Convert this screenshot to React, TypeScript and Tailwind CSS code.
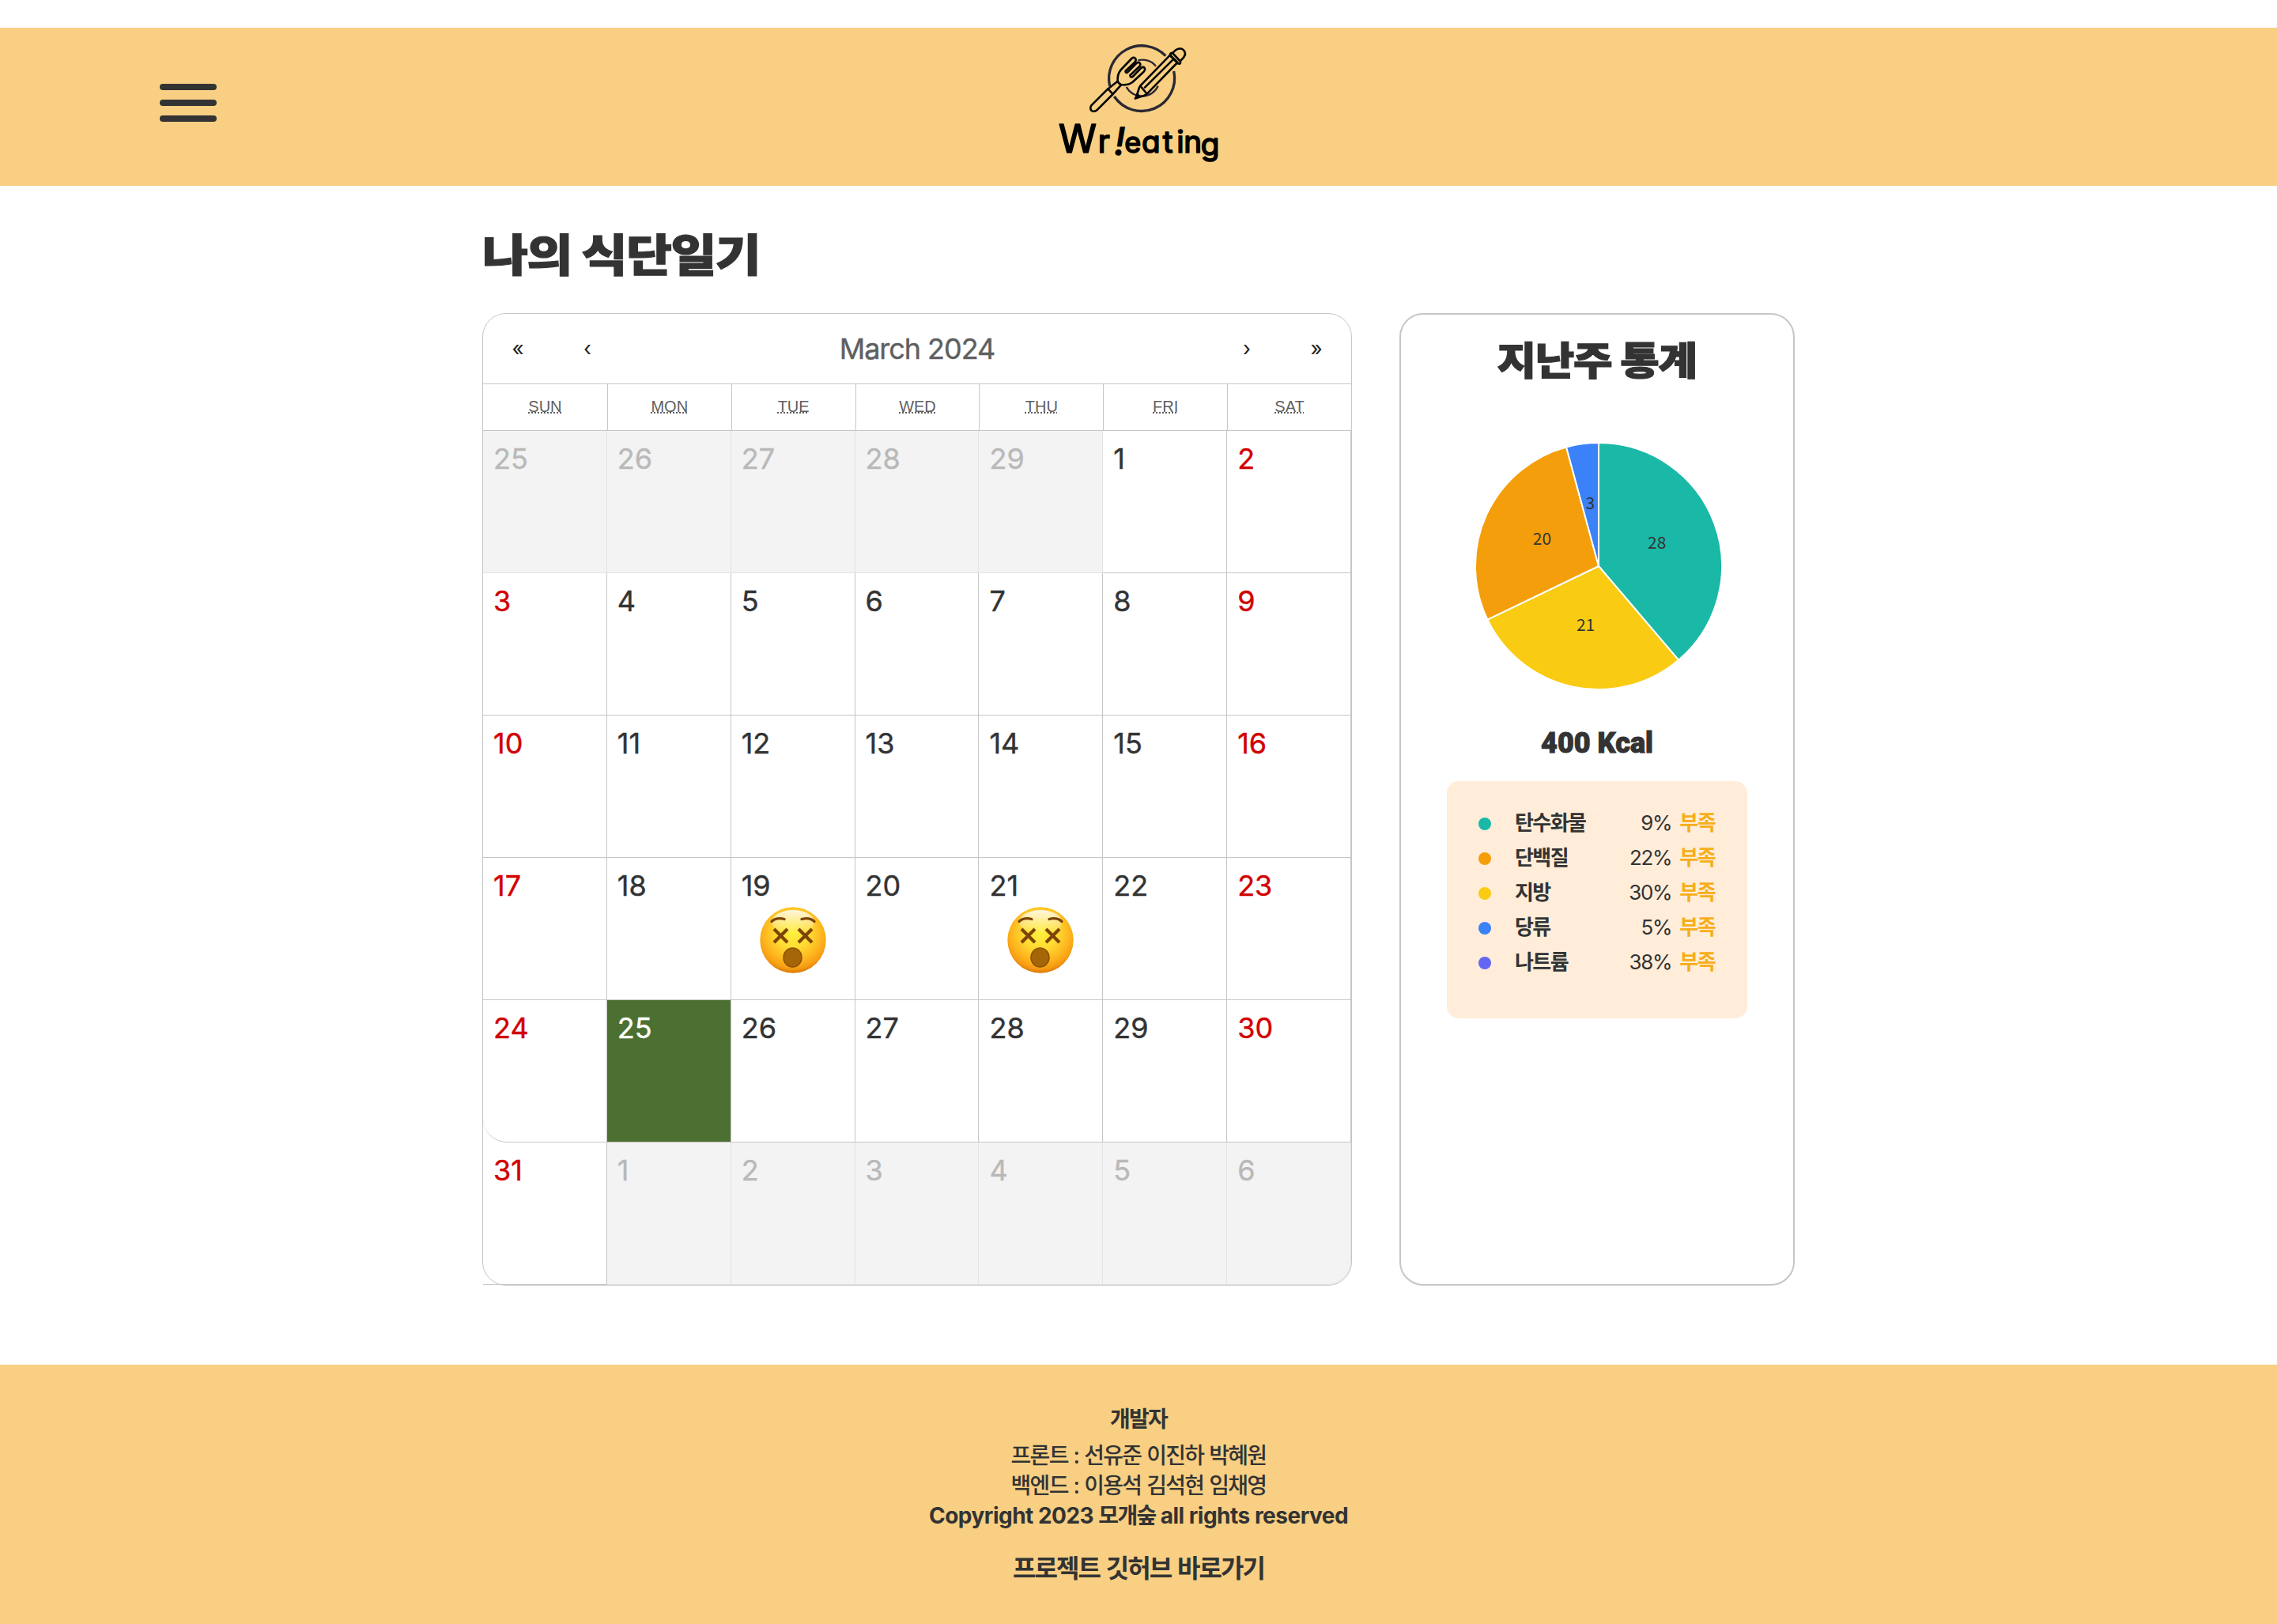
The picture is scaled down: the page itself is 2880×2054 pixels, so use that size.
const SANS = "font-['Inter','Noto_Sans_CJK_KR',sans-serif]";

const WEEKDAYS = ['SUN', 'MON', 'TUE', 'WED', 'THU', 'FRI', 'SAT'];

type Day = { label: number; outside: boolean; index: number };

const DAYS: Day[] = Array.from({ length: 42 }, (_, index) => {
  if (index < 5) return { label: 25 + index, outside: true, index };
  if (index < 36) return { label: index - 4, outside: false, index };
  return { label: index - 35, outside: true, index };
});

const NUTRIENTS = [
  { name: '탄수화물', percent: 9, dot: 'bg-[#1ab8a7]' },
  { name: '단백질', percent: 22, dot: 'bg-[#f59e0b]' },
  { name: '지방', percent: 30, dot: 'bg-[#f9cb13]' },
  { name: '당류', percent: 5, dot: 'bg-[#3b82f8]' },
  { name: '나트륨', percent: 38, dot: 'bg-[#6366f1]' },
];

function Logo() {
  return (
    <svg viewBox="0 15 720 600" className="h-[200px] w-[240px]" fill="none" strokeLinecap="round" strokeLinejoin="round">
      <g stroke="#2b2933" strokeWidth="10" strokeLinecap="butt">
        <path d="M463 122 A125 125 0 0 0 251 237" />
        <path d="M268 276 A125 125 0 0 0 494 180" />
        <path strokeWidth="7" d="M358 139 A67 67 0 0 1 426 161" />
        <path strokeWidth="7" d="M314 240 A67 67 0 0 0 434 236" />
      </g>
      <g stroke="#080808" strokeWidth="8">
        <path d="M244 247 L181 310 Q174 322 182 330 Q191 336 202 328 L263 267 Z" />
        <path d="M246 246 L281 218 M264 266 L294 232" />
        <path d="M281 218 Q279 190 294 174 L334 132 Q343 125 349 133 Q352 139 346 146 L311 179 Q309 187 318 185 L352 150 Q361 143 366 151 Q369 157 363 163 L328 196 Q329 205 338 201 L371 167 Q380 161 384 170 Q386 176 380 182 L337 222 Q320 235 294 231 Q284 228 281 218 Z" />
        <path d="M373 229 L480 119 L508 147 L399 259 Q392 268 382 272 L350 283 L363 242 Q366 234 373 229 Z" />
        <path d="M384 242 L491 136 M368 237 L390 264" />
        <path d="M480 119 L488 110 L517 141 Q522 148 516 152 Q510 153 506 147 L482 123 Q478 116 483 112 Q487 109 490 112" />
        <path d="M493 108 Q506 92 523 95 Q538 102 537 117 Q534 127 522 138" />
        <path fill="#080808" strokeWidth="4" d="M356 264 L345 285 L367 277 Z" />
      </g>
      <text
        x="57 206 268 307 372 452 505 532 596"
        y="489 489 497 489 489 489 489 489 497"
        fill="#000"
        stroke="#000"
        strokeWidth="5"
        className="font-['Inter',sans-serif] text-[116px] font-normal [font-feature-settings:'cv11']"
      >
        <tspan className="text-[146px]">W</tspan>
        <tspan className="text-[120px]">r</tspan>
        <tspan className="text-[144px] italic">!</tspan>
        <tspan className="text-[108px]">e</tspan>
        <tspan>ating</tspan>
      </text>
    </svg>
  );
}

function DizzyFace() {
  return (
    <svg viewBox="0 0 84 84" className="size-[84px]" fill="none" strokeLinecap="round">
      <defs>
        <radialGradient id="face" cx="50%" cy="38%" r="62%">
          <stop offset="0" stopColor="#fff03c" />
          <stop offset=".4" stopColor="#ffdc33" />
          <stop offset=".75" stopColor="#fdb11c" />
          <stop offset=".9" stopColor="#f59b12" />
          <stop offset="1" stopColor="#d97706" />
        </radialGradient>
        <linearGradient id="shine" x1="0" y1="0" x2="0" y2="1">
          <stop offset="0" stopColor="#fff" stopOpacity=".85" />
          <stop offset="1" stopColor="#fff" stopOpacity="0" />
        </linearGradient>
      </defs>
      <circle cx="42" cy="42" r="41.7" fill="url(#face)" />
      <ellipse cx="42" cy="19" rx="27" ry="15" fill="url(#shine)" />
      <g stroke="#7d4405">
        <path strokeWidth="3.2" d="M15 18.500 Q21 13 31 15.500 M53 15.500 Q63 13 69 18.500" />
        <path strokeWidth="4.2" strokeLinecap="butt" d="M18 28 L35 45 M35 28 L18 45 M49 28 L66 45 M66 28 L49 45" />
      </g>
      <ellipse cx="41.500" cy="64" rx="11.500" ry="12" fill="#a56608" stroke="#8c5003" strokeWidth="1.500" />
    </svg>
  );
}

function dayCellClasses({ index, outside, label }: Day) {
  const weekend = index % 7 === 0 || index % 7 === 6;
  if (outside) return 'border-[#e2e2e2] bg-[#f3f3f3] text-[#b9b9b9]';
  if (label === 25) return 'border-[#c6c6c6] bg-[#4c7031] text-white';
  if (weekend) return 'border-[#c6c6c6] text-[#d10000]';
  return 'border-[#c6c6c6] text-[#333]';
}

function Calendar() {
  const nav = 'flex w-[88px] items-center justify-center pb-px text-[26px] text-[#222]';
  return (
    <section className="flex h-[1230px] w-[1100px] flex-col rounded-[30px] border border-[#c6c6c6]">
      <div className="flex h-[89px] shrink-0 border-b border-[#c6c6c6]">
        <button className={nav}>«</button>
        <button className={nav}>‹</button>
        <div className="flex grow items-center justify-center text-[36px] tracking-[-0.029em] text-[#5f5f5f] [-webkit-text-stroke:0.4px_#5f5f5f]">March 2024</div>
        <button className={nav}>›</button>
        <button className={nav}>»</button>
      </div>
      <div className="grid h-[59px] shrink-0 grid-cols-7 border-b border-[#c6c6c6]">
        {WEEKDAYS.map((day, i) => (
          <div
            key={day}
            className={`flex items-center justify-center pb-[3px] font-['Liberation_Sans',sans-serif] text-[20px] text-[#5f5f5f] ${i > 0 ? 'border-l border-[#c6c6c6]' : ''}`}
          >
            <abbr className="underline decoration-dotted decoration-2">{day}</abbr>
          </div>
        ))}
      </div>
      <div className="grid shrink-0 grid-cols-7">
        {DAYS.map((day) => (
          <div
            key={day.index}
            className={`flex h-[180px] flex-col border-r border-b pt-[13px] ${dayCellClasses(day)} ${day.index === 28 ? 'rounded-bl-[30px]' : ''} ${day.index === 41 ? 'rounded-br-[30px]' : ''}`}
          >
            <span className="pl-[13px] text-[36px] leading-[44px] [-webkit-text-stroke:0.4px_currentColor]">{day.label}</span>
            {!day.outside && (day.label === 19 || day.label === 21) && (
              <div className="mt-[5px] flex justify-center">
                <DizzyFace />
              </div>
            )}
          </div>
        ))}
      </div>
    </section>
  );
}

const CX = 158;
const CY = 158;
const R = 156;
const SLICES = [
  { from: 0, to: 139.6, color: '#1ab8a7', value: 28, x: 231.7, y: 128.7 },
  { from: 139.6, to: 244.3, color: '#f9cb13', value: 21, x: 141.6, y: 232 },
  { from: 244.3, to: 344.8, color: '#f59e0b', value: 20, x: 86.5, y: 123.5 },
  { from: 344.8, to: 360, color: '#3b82f8', value: 3, x: 147.3, y: 78.5 },
];

function point(angle: number) {
  const rad = (angle * Math.PI) / 180;
  return `${CX + R * Math.sin(rad)} ${CY - R * Math.cos(rad)}`;
}

function Pie() {
  return (
    <svg viewBox="0 0 316 316" className="ml-1 size-[316px]">
      {SLICES.map((s) => (
        <path
          key={s.value}
          d={`M${CX} ${CY} L${point(s.from)} A${R} ${R} 0 0 1 ${point(s.to)} Z`}
          fill={s.color}
          stroke="#fff"
          strokeWidth="2"
        />
      ))}
      {SLICES.map((s) => (
        <text key={s.value} x={s.x} y={s.y + 7.5} textAnchor="middle" fill="#333" className="font-['Noto_Sans_CJK_KR',sans-serif] text-[21px]">
          {s.value}
        </text>
      ))}
    </svg>
  );
}

function Stats() {
  return (
    <section className="flex h-[1230px] w-[500px] flex-col items-center rounded-[30px] border-2 border-[#c6c6c6]">
      <h2 className="mt-[17px] h-[80px] scale-x-[1.1] font-['Noto_Sans_CJK_KR',sans-serif] text-[49px] leading-[76px] font-black tracking-[-0.025em] whitespace-nowrap text-[#333] [-webkit-text-stroke:1.2px_#333]">
        지난주 통계
      </h2>
      <div className="mt-[63px]">
        <Pie />
      </div>
      <p className="mt-[44px] h-[44px] font-['Roboto',sans-serif] text-[36px] leading-[44px] font-black text-[#333] [-webkit-text-stroke:1px_#333]">
        400 Kcal
      </p>
      <ul className="mt-[26px] h-[300px] w-[380px] rounded-[15px] bg-[#ffedd9] px-[40px] pt-[30px]">
        {NUTRIENTS.map((n) => (
          <li key={n.name} className="flex h-[44px] items-center text-[26px] text-[#333]">
            <span className={`mt-[4px] size-4 rounded-full ${n.dot}`} />
            <span className="ml-[30px] grow font-bold tracking-[-0.06em]">{n.name}</span>
            <span className="tracking-[-0.05em]">{n.percent}%</span>
            <span className="mr-px ml-[10px] font-bold tracking-[-0.06em] text-[#f6ae1b]">부족</span>
          </li>
        ))}
      </ul>
    </section>
  );
}

export default function App() {
  return (
    <div className={`flex h-[2054px] w-[2880px] flex-col overflow-hidden bg-white pt-[35px] ${SANS}`}>
      <header className="grid h-[200px] shrink-0 grid-cols-3 bg-[#f8cf83]">
        <div className="flex flex-col gap-3 pt-[71px] pl-[202px]">
          <span className="h-2 w-[72px] rounded bg-[#333]" />
          <span className="h-2 w-[72px] rounded bg-[#333]" />
          <span className="h-2 w-[72px] rounded bg-[#333]" />
        </div>
        <div className="flex justify-center">
          <Logo />
        </div>
      </header>
      <main className="mx-auto w-[1660px] grow">
        <h1 className="h-[161px] origin-left scale-x-[1.125] pt-[42px] font-['Noto_Sans_CJK_KR',sans-serif] text-[56px] leading-[84px] font-black tracking-[-0.025em] whitespace-nowrap text-[#333] [-webkit-text-stroke:1.2px_#333]">
          나의 식단일기
        </h1>
        <div className="flex gap-[60px]">
          <Calendar />
          <Stats />
        </div>
      </main>
      <footer className="flex h-[328px] shrink-0 flex-col items-center bg-[#f8cf83] pt-[50px] text-[28px] leading-[38px] whitespace-nowrap text-[#333]">
        <p className="mb-2 font-bold tracking-[-0.06em]">개발자</p>
        <p className="font-medium tracking-[-0.06em] [word-spacing:1px]">프론트 : 선유준 이진하 박혜원</p>
        <p className="font-medium tracking-[-0.06em] [word-spacing:1px]">백엔드 : 이용석 김석현 임채영</p>
        <p className="font-bold tracking-[-0.018em]">
          Copyright 2023 <span className="tracking-[-0.06em]">모개숲</span> all rights reserved
        </p>
        <p className="mt-[29px] text-[32px] font-bold tracking-[-0.06em] [word-spacing:2px]">프로젝트 깃허브 바로가기</p>
      </footer>
    </div>
  );
}
